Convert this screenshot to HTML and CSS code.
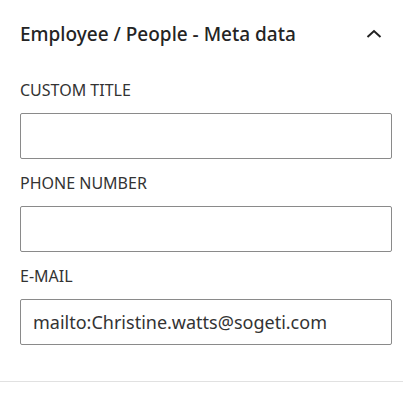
FILE: index.html
```html
<!DOCTYPE html>
<html>
<head>
<meta charset="utf-8">
<link rel="stylesheet" href="styles.css">
</head>
<body>
<section class="panel">
  <div class="header">
    <h2 class="title">Employee / People - Meta data</h2>
    <svg class="chevron" width="16" height="10" viewBox="0 0 16 10"><path d="M1.5 8 L8 2 L14.5 8" fill="none" stroke="#222" stroke-width="2"/></svg>
  </div>
  <div class="fields">
    <div class="field">
      <label class="label">CUSTOM TITLE</label>
      <div class="input"></div>
    </div>
    <div class="field">
      <label class="label">PHONE NUMBER</label>
      <div class="input"></div>
    </div>
    <div class="field">
      <label class="label">E-MAIL</label>
      <div class="input">mailto:Christine.watts@sogeti.com</div>
    </div>
  </div>
</section>
</body>
</html>
```
FILE: styles.css
```css
html, body { margin: 0; padding: 0; background: #fff; }
body { font-family: "Noto Sans", "Open Sans", sans-serif; color: #222; }
.panel {
  width: 403px;
  box-sizing: border-box;
  padding: 0 11px 36px 20px;
  border-bottom: 1px solid #e1e1e1;
}
.header {
  height: 68px;
  display: flex;
  align-items: center;
  justify-content: space-between;
}
.title {
  margin: 0;
  font-size: 19px;
  font-weight: 500;
  line-height: 24px;
  color: #242424;
}
.chevron { margin-right: 10px; }
.fields {
  display: flex;
  flex-direction: column;
  gap: 14px;
  padding-top: 12px;
}
.field { display: flex; flex-direction: column; gap: 13px; }
.label {
  font-size: 16px;
  line-height: 20px;
  color: #333;
}
.input {
  height: 46px;
  box-sizing: border-box;
  border: 1px solid #8a8a8a;
  border-radius: 2px;
  padding: 0 12px;
  display: flex;
  align-items: center;
  font-size: 18px;
  color: #333;
}
```
